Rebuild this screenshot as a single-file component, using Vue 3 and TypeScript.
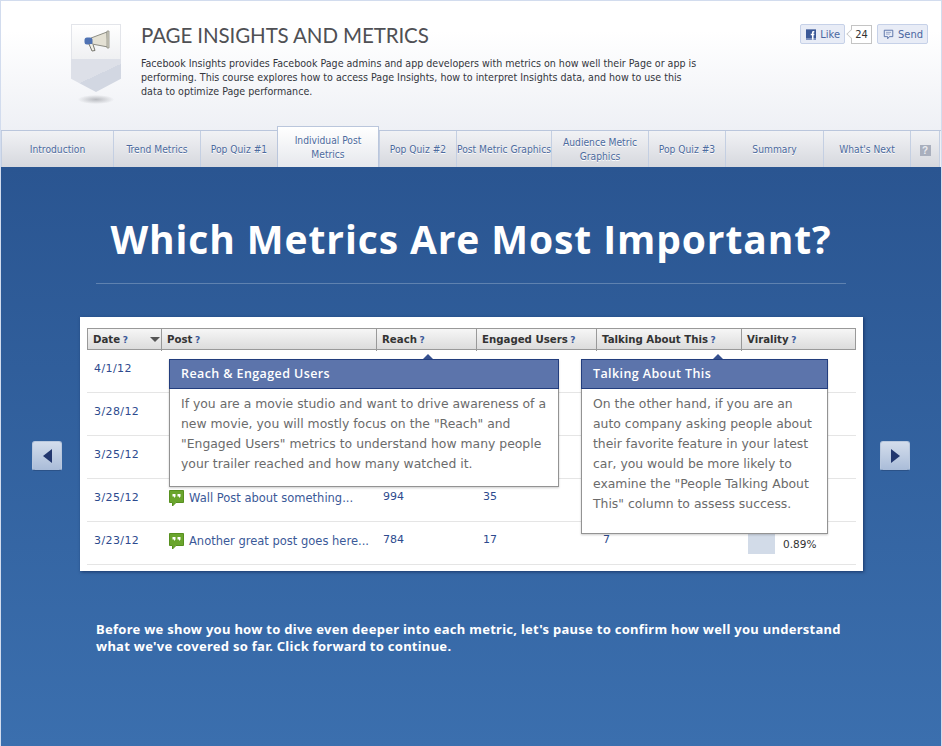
<script setup lang="ts">
interface Tab { label: string; active?: boolean; nowrap?: boolean }
interface Row { date: string; post: string; reach: string; engaged: string; talking: string; virality?: string }

const tabs: Tab[] = [
  { label: 'Introduction' },
  { label: 'Trend Metrics' },
  { label: 'Pop Quiz #1' },
  { label: 'Individual Post Metrics', active: true },
  { label: 'Pop Quiz #2' },
  { label: 'Post Metric Graphics', nowrap: true },
  { label: 'Audience Metric Graphics' },
  { label: 'Pop Quiz #3' },
  { label: 'Summary' },
  { label: "What's Next" },
]

const columns = ['Date', 'Post', 'Reach', 'Engaged Users', 'Talking About This', 'Virality']

const rows: Row[] = [
  { date: '4/1/12', post: '', reach: '', engaged: '', talking: '' },
  { date: '3/28/12', post: '', reach: '', engaged: '', talking: '' },
  { date: '3/25/12', post: '', reach: '', engaged: '', talking: '' },
  { date: '3/25/12', post: 'Wall Post about something...', reach: '994', engaged: '35', talking: '' },
  { date: '3/23/12', post: 'Another great post goes here...', reach: '784', engaged: '17', talking: '7', virality: '0.89%' },
]
</script>

<template>
  <div class="page">
    <header class="head">
      <div class="badge">
        <div class="badge-top">
          <svg width="27" height="24" viewBox="0 0 27 24">
            <path d="M8 8 L24 2 L25 17 L9 14 Z" fill="#e4e1d4" stroke="#8d8d84" stroke-width="1" />
            <path d="M24 1 L26 1 L26 18 L24 18 Z" fill="#d8d5c6" stroke="#8d8d84" stroke-width="0.8" />
            <rect x="1.5" y="7.5" width="8" height="7" rx="2.5" fill="#4f72b3" />
            <path d="M6 14 L9 21 L12 20.500 L10 14.500" fill="#f1efe6" stroke="#77776f" stroke-width="1" />
          </svg>
        </div>
        <div class="badge-tail"></div>
        <div class="badge-shadow"></div>
      </div>
      <div class="intro">
        <h1>PAGE INSIGHTS AND METRICS</h1>
        <p>
          Facebook Insights provides Facebook Page admins and app developers with metrics on how well their Page or app is<br />
          performing. This course explores how to access Page Insights, how to interpret Insights data, and how to use this<br />
          data to optimize Page performance.
        </p>
      </div>
      <div class="social">
        <span class="fb-btn like">
          <svg width="13" height="13" viewBox="0 0 13 13">
            <rect width="13" height="13" fill="#3b5998" />
            <rect y="11" width="13" height="2" fill="#7e93c0" />
            <path d="M7.500 13 V7.500 H6 V5.500 H7.500 V4 C7.500 2.500 8.500 2 10.500 2 V4 C9.500 4 9.500 4 9.500 5.500 H10.700 L10.400 7.500 H9.500 V13 Z" fill="#fff" />
          </svg>
          Like
        </span>
        <span class="count">24</span>
        <span class="fb-btn send">
          <svg width="13" height="13" viewBox="0 0 13 13">
            <path d="M1.500 1.500 H11.500 V9 H7.500 L5.500 11.500 V9 H1.500 Z" fill="none" stroke="#4a66a0" />
            <path d="M3.500 4 H9.500 M3.500 6 H8" stroke="#8a9cc3" />
          </svg>
          Send
        </span>
      </div>
    </header>

    <nav class="tabs">
      <div v-for="tab in tabs" :key="tab.label" class="tab" :class="{ active: tab.active, nowrap: tab.nowrap }">{{ tab.label }}</div>
      <div class="tab help"><span class="q">?</span></div>
    </nav>

    <main class="stage">
      <h2>Which Metrics Are Most Important?</h2>
      <div class="rule"></div>

      <div class="middle">
        <button class="arrow" type="button" aria-label="Previous"><span class="tri left"></span></button>
        <section class="card">
          <div class="grid thead">
            <div v-for="col in columns" :key="col" class="th">
              {{ col }} <span class="hint">?</span>
              <span v-if="col === 'Date'" class="sort"></span>
            </div>
          </div>
          <div v-for="(row, i) in rows" :key="i" class="grid tr">
            <div class="td date">{{ row.date }}</div>
            <div class="td post">
              <svg v-if="row.post" width="15" height="17" viewBox="0 0 15 17">
                <path d="M0.500 0.500 H14.500 V12.500 H7 L3.500 16 V12.500 H0.500 Z" fill="#6aa52d" stroke="#57901f" />
                <path d="M3.500 4 H6.500 V6.500 L5 8 V6.500 H3.500 Z M8.500 4 H11.500 V6.500 L10 8 V6.500 H8.500 Z" fill="#fff" />
              </svg>
              <span>{{ row.post }}</span>
            </div>
            <div class="td">{{ row.reach }}</div>
            <div class="td">{{ row.engaged }}</div>
            <div class="td">{{ row.talking }}</div>
            <div class="td virality">
              <template v-if="row.virality">
                <span class="bar"></span><span class="pct">{{ row.virality }}</span>
              </template>
            </div>
          </div>

          <aside class="tip tip-reach">
            <span class="pointer p1"></span>
            <h3>Reach &amp; Engaged Users</h3>
            <p>
              If you are a movie studio and want to drive awareness of a<br />
              new movie, you will mostly focus on the "Reach" and<br />
              "Engaged Users" metrics to understand how many people<br />
              your trailer reached and how many watched it.
            </p>
          </aside>
          <aside class="tip tip-talk">
            <span class="pointer p3"></span>
            <h3>Talking About This</h3>
            <p>
              On the other hand, if you are an<br />
              auto company asking people about<br />
              their favorite feature in your latest<br />
              car, you would be more likely to<br />
              examine the "People Talking About<br />
              This" column to assess success.
            </p>
          </aside>
        </section>
        <button class="arrow next" type="button" aria-label="Next"><span class="tri right"></span></button>
      </div>

      <p class="outro">
        Before we show you how to dive even deeper into each metric, let's pause to confirm how well you understand<br />
        what we've covered so far. Click forward to continue.
      </p>
    </main>
  </div>
</template>

<style>
html, body { margin: 0; padding: 0; background: #fff; }
</style>

<style scoped>
.page {
  width: 942px;
  height: 746px;
  box-sizing: border-box;
  border: 1px solid #d2dcee;
  border-bottom: 0;
  display: flex;
  flex-direction: column;
  overflow: hidden;
  font-family: "DejaVu Sans Condensed", "Noto Sans", sans-serif;
  background: linear-gradient(#fff 30px, #eef0f5 130px);
}

.head {
  height: 129px;
  flex: none;
  display: flex;
  box-sizing: border-box;
  padding: 23px 13px 0 70px;
}
.badge { width: 50px; flex: none; }
.badge-top {
  height: 35px;
  box-sizing: border-box;
  border: 1px solid #e3e5ea;
  border-bottom: 0;
  background: linear-gradient(#fff, #eff0f2);
  display: flex;
  align-items: center;
  justify-content: center;
}
.badge-tail {
  height: 33px;
  background: linear-gradient(155deg, #dde0e8 50%, #d2d7e2 50%);
  clip-path: polygon(0 0, 100% 0, 100% 60%, 50% 100%, 0 60%);
}
.badge-shadow {
  width: 36px;
  height: 9px;
  margin: 3px auto 0;
  border-radius: 50%;
  background: radial-gradient(ellipse, #b9bbc0 0%, rgba(200, 202, 208, 0) 72%);
}
.intro { margin-left: 20px; width: 600px; }
.intro h1 {
  margin: -2px 0 0;
  font: 400 20.500px/26px Lato, sans-serif;
  letter-spacing: -0.1px;
  color: #4f5054;
  white-space: nowrap;
}
.intro p {
  margin: 8px 0 0;
  font-size: 10.600px;
  line-height: 14px;
  color: #34363d;
  white-space: nowrap;
}
.social {
  margin-left: auto;
  display: flex;
  align-items: flex-start;
  font-size: 11px;
  color: #4a66a0;
}
.fb-btn {
  height: 20px;
  box-sizing: border-box;
  display: inline-flex;
  align-items: center;
  gap: 4px;
  padding: 0 4px 0 5px;
  background: #e8ecf6;
  border: 1px solid #c6d1e8;
  border-radius: 2px;
  white-space: nowrap;
}
.like { width: 45px; }
.send { width: 51px; margin-left: 5px; }
.count {
  position: relative;
  width: 21px;
  height: 19px;
  box-sizing: border-box;
  margin: 1px 0 0 6px;
  border: 1px solid #c4c4c4;
  background: #fff;
  color: #333;
  text-align: center;
  line-height: 17px;
}
.count::before {
  content: "";
  position: absolute;
  left: -5px;
  top: 4px;
  width: 7px;
  height: 7px;
  background: #fff;
  border-left: 1px solid #c4c4c4;
  border-bottom: 1px solid #c4c4c4;
  transform: rotate(45deg) scale(0.8);
}

.tabs {
  height: 37px;
  flex: none;
  box-sizing: border-box;
  display: grid;
  grid-template-columns: 112px 87px 77px 102px 77px 95px 97px 77px 98px 87px 30px;
  border-top: 1px solid #bac6dc;
  background: #eef0f5;
}
.tab {
  display: flex;
  align-items: center;
  justify-content: center;
  text-align: center;
  box-sizing: border-box;
  padding-top: 2px;
  font-size: 10.200px;
  line-height: 14px;
  color: #4c6a9e;
  border-left: 1px solid #c4cfe2;
  background: linear-gradient(#f1f2f5, #d6d8de);
  text-shadow: 0 1px 0 #fff;
}
.tab.nowrap { white-space: nowrap; }
.tab.active {
  margin-top: -5px;
  padding: 2px 8px 0;
  border: 1px solid #bac6dc;
  border-bottom: 0;
  background: linear-gradient(#fff, #e6e8ed);
}
.help { border-right: 1px solid #c4cfe2; }
.q {
  width: 11px;
  height: 11px;
  background: #a9afbd;
  color: #e9ebf0;
  font: 700 10px/11px "Liberation Sans", sans-serif;
  text-shadow: none;
}

.stage {
  flex: 1;
  padding-top: 49px;
  background: linear-gradient(#2a5591, #3b6fae);
  color: #fff;
}
h2 {
  margin: 0;
  height: 48px;
  font: 700 39px/45px "Open Sans", sans-serif;
  text-align: center;
  letter-spacing: 0.9px;
  color: #fff;
  white-space: nowrap;
}
.rule {
  height: 1px;
  margin: 19px 95px 0 95px;
  background: #5f82b0;
}
.middle {
  display: flex;
  align-items: flex-start;
  gap: 18px;
  margin-top: 33px;
  padding-left: 31px;
}
.arrow {
  flex: none;
  width: 30px;
  height: 30px;
  margin-top: 124px;
  padding: 0;
  display: flex;
  align-items: center;
  justify-content: center;
  background: linear-gradient(#d3ddec, #a9bcd8);
  border: 1px solid #b9c8de;
  border-bottom-color: #2b5288;
  border-radius: 3px;
}
.next { margin-left: -1px; }
.tri { width: 0; height: 0; border: 7px solid transparent; }
.tri.left { border-right: 9px solid #22376e; border-left: 0; }
.tri.right { border-left: 9px solid #22376e; border-right: 0; }

.card {
  position: relative;
  width: 783px;
  height: 254px;
  box-sizing: border-box;
  padding: 11px 7px 0;
  background: #fff;
  box-shadow: 1px 1px 3px rgba(15, 35, 80, 0.7);
  color: #2d4a8e;
  font-family: "DejaVu Sans", sans-serif;
  font-size: 11px;
}
.grid {
  display: grid;
  grid-template-columns: 73px 215px 100px 120px 145px 116px;
}
.thead {
  height: 22px;
  box-sizing: border-box;
  border: 1px solid #999;
  background: linear-gradient(#f6f6f6, #dcdcdc);
}
.th {
  position: relative;
  padding-left: 5px;
  line-height: 22px;
  font-weight: 700;
  font-size: 10.200px;
  color: #333;
  border-left: 1px solid #999;
  white-space: nowrap;
}
.th:first-child { border-left: 0; }
.hint { color: #3b5998; font-size: 9px; margin-left: -1px; }
.sort {
  position: absolute;
  right: 1px;
  top: 8px;
  width: 0;
  height: 0;
  border: 5px solid transparent;
  border-top: 5px solid #555;
  border-bottom: 0;
}
.tr {
  height: 43px;
  box-sizing: border-box;
  border-bottom: 1px solid #e5e5e5;
}
.td {
  padding: 10px 0 0 8px;
  line-height: 16px;
  min-width: 0;
  white-space: nowrap;
}
.date { letter-spacing: 0.4px; padding: 11px 0 0 7px; }
.post {
  display: flex;
  align-items: flex-start;
  gap: 5px;
  padding: 11px 0 0 9px;
  color: #3b5998;
  font-size: 11.500px;
}
.post svg { flex: none; }
.virality { position: relative; padding: 0; }
.bar {
  position: absolute;
  left: 8px;
  top: 11px;
  width: 27px;
  height: 21px;
  background: #d2dbe8;
}
.pct {
  position: absolute;
  left: 43px;
  top: 14px;
  color: #333;
  line-height: 16px;
  font-size: 10.500px;
}

.tip {
  position: absolute;
  top: 42px;
  box-sizing: border-box;
  background: #fff;
  border: 1px solid #939393;
  border-top: 0;
  box-shadow: 0 1px 2px rgba(0, 0, 0, 0.2);
}
.tip-reach { left: 89px; width: 390px; height: 128px; }
.tip-talk { left: 501px; width: 247px; height: 175px; }
.tip h3 {
  margin: 0 -1px;
  height: 30px;
  box-sizing: border-box;
  padding-left: 11px;
  background: #5c74ab;
  border: 1px solid #223d7d;
  color: #fff;
  font: 600 12.500px/28px "Open Sans", sans-serif;
  letter-spacing: 0.4px;
}
.tip p {
  margin: 0;
  padding: 5px 10px 0 11px;
  font-size: 12.400px;
  line-height: 20px;
  color: #6b6b6b;
  white-space: nowrap;
}
.pointer {
  position: absolute;
  top: -5px;
  width: 0;
  height: 0;
  border: 5px solid transparent;
  border-top: 0;
  border-bottom: 5px solid #36508f;
}
.p1 { left: 253px; }
.p3 { left: 131px; }

.outro {
  margin: 50px 0 0 95px;
  font: 700 13px/17px "Noto Sans", sans-serif;
  letter-spacing: 0.27px;
  color: #fff;
  white-space: nowrap;
}
</style>
